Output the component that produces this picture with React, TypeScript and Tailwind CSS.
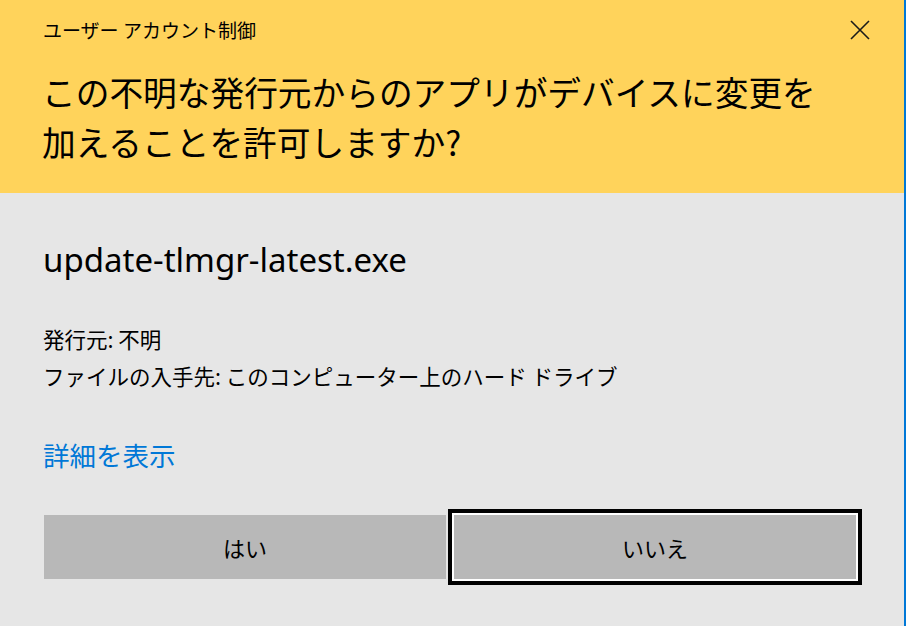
import React from "react";

const jp = { fontFamily: '"Noto Sans CJK JP", "Noto Sans", sans-serif' };
const latin = { fontFamily: '"Noto Sans", "Noto Sans CJK JP", sans-serif' };

export default function App() {
  return (
    <div className="w-[906px] h-[626px] bg-[#e6e6e6] border-r-2 border-[#0078d7] flex flex-col text-black overflow-hidden" style={jp}>
      <div className="bg-[#ffd35b] h-[193px] flex flex-col shrink-0">
        <div className="h-[59px] flex items-center justify-between pl-[43px] pr-[34px]">
          <span className="text-[19px] leading-[24px]">ユーザー アカウント制御</span>
          <svg width="20" height="20" viewBox="0 0 20 20" className="block">
            <path d="M1 1 L19 19 M19 1 L1 19" stroke="#1a1a1a" strokeWidth="1.6" fill="none" />
          </svg>
        </div>
        <div className="pl-[42px] mt-[8px] text-[33.7px] leading-[50px]">
          この不明な発行元からのアプリがデバイスに変更を
          <br />
          加えることを許可しますか?
        </div>
      </div>
      <div className="pl-[43px] flex flex-col">
        <div className="mt-[45px] text-[33px] leading-[44px]" style={latin}>update-tlmgr-latest.exe</div>
        <div className="mt-[38px] text-[21.5px] leading-[37px]">
          <div>発行元: 不明</div>
          <div>ファイルの入手先: このコンピューター上のハード ドライブ</div>
        </div>
        <div className="mt-[45px] text-[26.5px] leading-[32px] text-[#0078d7]">詳細を表示</div>
      </div>
      <div className="mt-[44px] pl-[44px] flex gap-[8px]">
        <div className="w-[402px] h-[64px] bg-[#b8b8b8] flex items-center justify-center text-[22px]">はい</div>
        <div className="w-[402px] h-[64px] bg-[#b8b8b8] flex items-center justify-center text-[22px] shadow-[0_0_0_2px_#ffffff,0_0_0_6px_#000000]">いいえ</div>
      </div>
    </div>
  );
}
